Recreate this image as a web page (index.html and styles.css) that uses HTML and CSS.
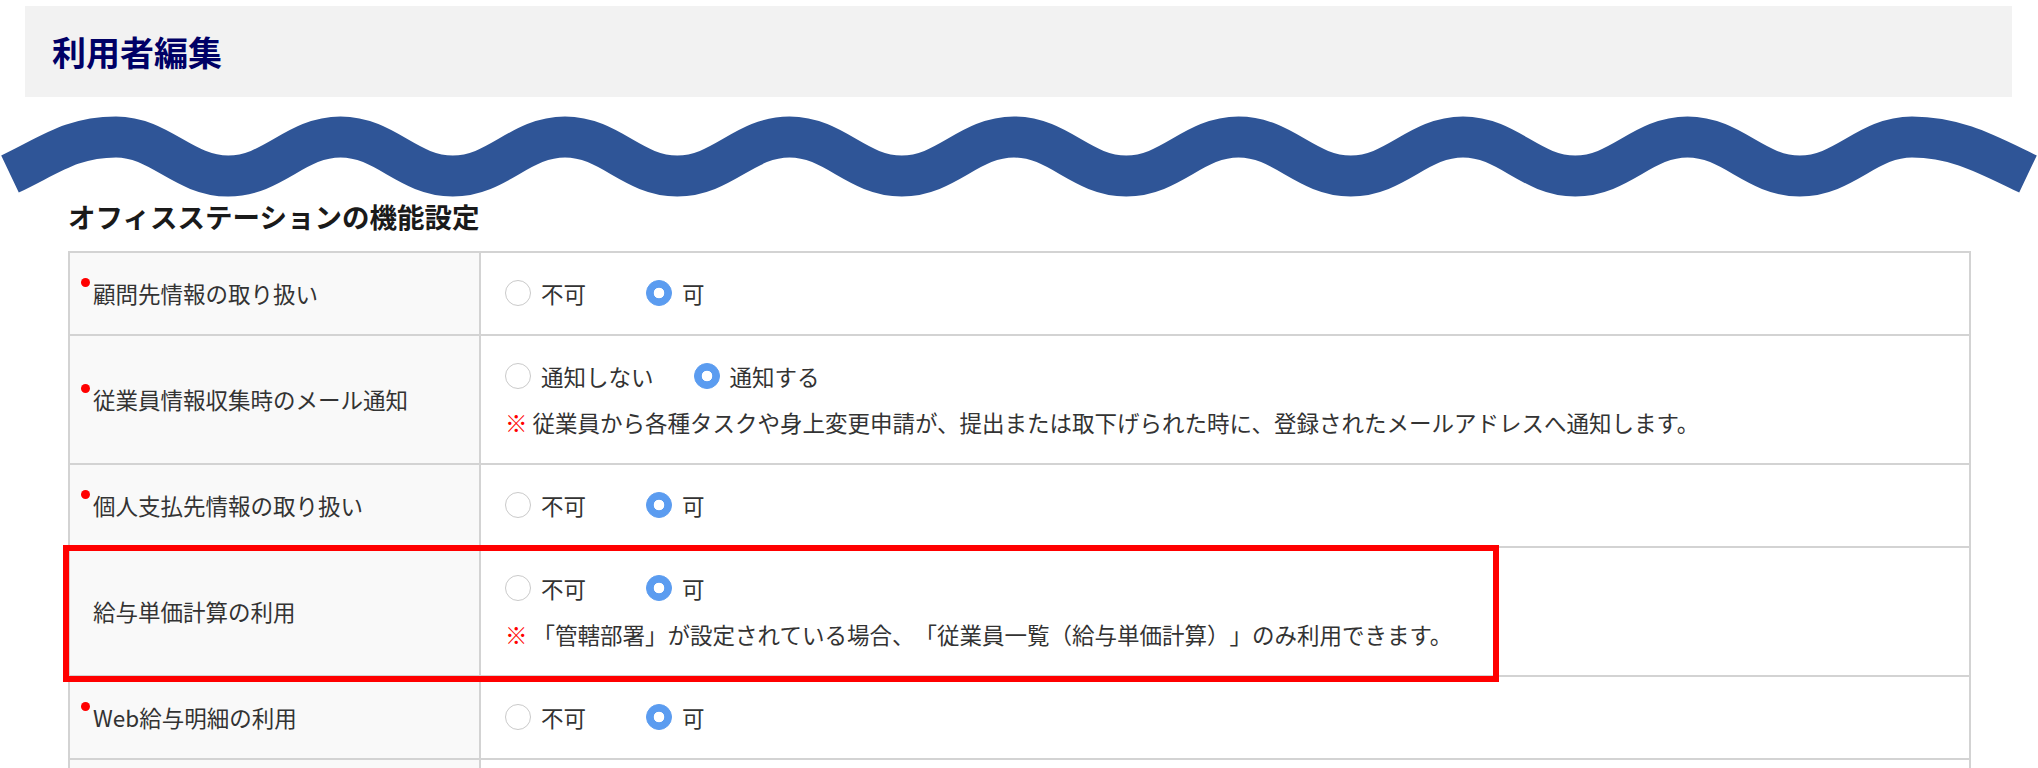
FILE: index.html
```html
<!DOCTYPE html>
<html lang="ja">
<head>
  <meta charset="UTF-8" />
  <meta name="viewport" content="width=device-width, initial-scale=1.0" />
  <title>利用者編集</title>
  <link rel="stylesheet" href="styles.css">
</head>
<body>
  <div class="page-head">
    <h1>利用者編集</h1>
  </div>

  <svg class="wave" viewBox="0 97 2038 100" width="2038" height="100" aria-hidden="true">
    <path d="M10 174 C50 155 72 137 116 137 S183.25 176 228.25 176 S295.5 137 340.5 137
             S407.75 176 452.75 176 S520 137 565 137 S632.25 176 677.25 176 S744.5 137 789.5 137
             S856.75 176 901.75 176 S969 137 1014 137 S1081.25 176 1126.25 176 S1193.5 137 1238.5 137
             S1305.75 176 1350.75 176 S1418 137 1463 137 S1530.25 176 1575.25 176 S1642.5 137 1687.5 137
             S1754.75 176 1799.75 176 S1867 137 1912 137 C1957 137 1988 155 2028 174" />
  </svg>

  <div class="section">
    <h2>オフィスステーションの機能設定</h2>

    <div class="table-wrap">
      <table class="settings">
        <tr>
          <th><span class="required">顧問先情報の取り扱い</span></th>
          <td>
            <div class="choices">
              <label><input type="radio" name="client"> 不可</label>
              <label><input type="radio" name="client" checked> 可</label>
            </div>
          </td>
        </tr>
        <tr>
          <th><span class="required">従業員情報収集時のメール通知</span></th>
          <td>
            <div class="choices">
              <label><input type="radio" name="mail"> 通知しない</label>
              <label><input type="radio" name="mail" checked> 通知する</label>
            </div>
            <p class="note"><span class="mark">※</span> 従業員から各種タスクや身上変更申請が、提出または取下げられた時に、登録されたメールアドレスへ通知します。</p>
          </td>
        </tr>
        <tr>
          <th><span class="required">個人支払先情報の取り扱い</span></th>
          <td>
            <div class="choices">
              <label><input type="radio" name="payee"> 不可</label>
              <label><input type="radio" name="payee" checked> 可</label>
            </div>
          </td>
        </tr>
        <tr>
          <th><span>給与単価計算の利用</span></th>
          <td>
            <div class="choices">
              <label><input type="radio" name="unitprice"> 不可</label>
              <label><input type="radio" name="unitprice" checked> 可</label>
            </div>
            <p class="note"><span class="mark">※</span> 「管轄部署」が設定されている場合、「従業員一覧（給与単価計算）」のみ利用できます。</p>
          </td>
        </tr>
        <tr>
          <th><span class="required">Web給与明細の利用</span></th>
          <td>
            <div class="choices">
              <label><input type="radio" name="payslip"> 不可</label>
              <label><input type="radio" name="payslip" checked> 可</label>
            </div>
          </td>
        </tr>
        <tr class="filler">
          <th></th>
          <td></td>
        </tr>
      </table>

      <div class="highlight"></div>
    </div>
  </div>
</body>
</html>
```

FILE: styles.css
```css
body {
  font-family: "Noto Sans CJK JP", "Noto Sans", sans-serif;
  color: #333;
  background: white;
  margin: 0;
  text-spacing-trim: space-all;
}

.page-head {
  display: flex;
  align-items: center;
  height: 91px;
  margin: 6px 26px 0 25px;
  padding-left: 27px;
  background: #f2f2f2;
}

h1 {
  font-size: 34px;
  font-weight: bold;
  color: #000066;
  margin: 0;
}

.wave {
  display: block;
}

.wave path {
  fill: none;
  stroke: #2f5597;
  stroke-width: 41;
  stroke-linecap: butt;
}

.section {
  margin-left: 68px;
  width: 1903px;
}

h2 {
  font-size: 27.5px;
  line-height: 38px;
  font-weight: bold;
  color: #1a1a1a;
  margin: 0 0 16px 0;
}

.table-wrap {
  position: relative;
}

.settings {
  width: 100%;
  border-collapse: collapse;
  font-size: 22.5px;
  line-height: 34px;
}

.settings th,
.settings td {
  border: 2px solid #d3d3d3;
  padding: 23px 24px 24px 24px;
  vertical-align: middle;
  text-align: left;
}

.settings th {
  width: 362px;
  padding-left: 23px;
  font-weight: normal;
  background: #f9f9f9;
}

.filler th,
.filler td {
  height: 34px;
}

.required {
  position: relative;
}

.required::before {
  content: "";
  position: absolute;
  left: -12px;
  top: 1px;
  width: 9px;
  height: 9px;
  border-radius: 50%;
  background: #ff0000;
}

.choices {
  display: flex;
  align-items: center;
}

.choices label {
  display: inline-flex;
  align-items: center;
  min-width: 101px;
  margin-right: 40px;
}

input[type="radio"] {
  appearance: none;
  width: 26px;
  height: 26px;
  margin: 0 10px 0 0;
  border: 1.5px solid #cacaca;
  border-radius: 50%;
  background: white;
  box-sizing: border-box;
}

input[type="radio"]:checked {
  border-color: #5b9cf0;
  background: radial-gradient(circle, white 0 5px, #5b9cf0 5.6px);
}

.note {
  margin: 12px 0 0 0;
}

.mark {
  color: #ff0000;
}

.highlight {
  position: absolute;
  left: -5px;
  top: 294px;
  width: 1436px;
  height: 137px;
  border: 6px solid #ff0000;
  box-sizing: border-box;
}
```
